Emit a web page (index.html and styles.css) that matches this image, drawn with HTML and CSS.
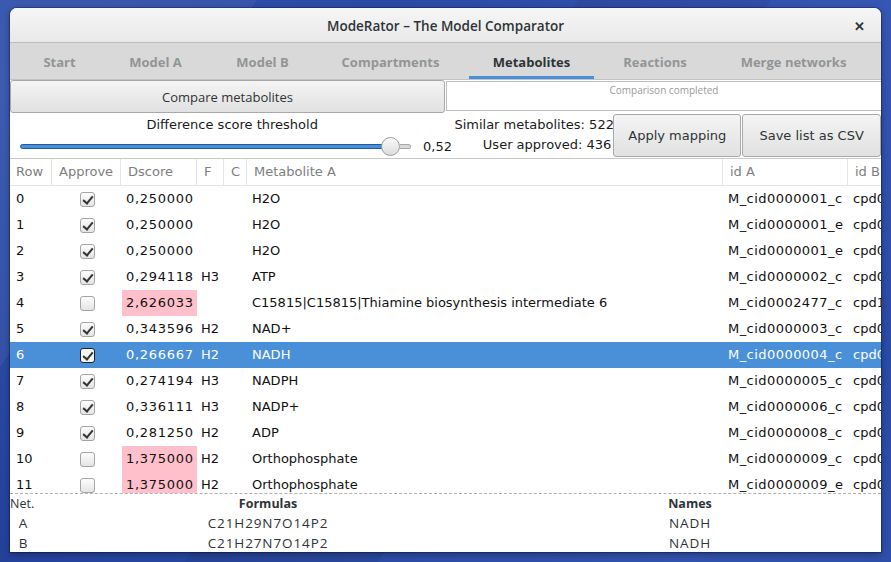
FILE: index.html
```html
<!DOCTYPE html>
<html>
<head>
<meta charset="utf-8">
<title>ModeRator</title>
<link rel="stylesheet" href="styles.css">
</head>
<body>
<div class="window">
  <div class="titlebar">
    <span class="title">ModeRator – The Model Comparator</span>
    <span class="close">✕</span>
  </div>
  <div class="tabs">
    <div class="tab w85">Start</div>
    <div class="tab w107">Model A</div>
    <div class="tab w107">Model B</div>
    <div class="tab w149">Compartments</div>
    <div class="tab w133 active">Metabolites</div>
    <div class="tab w114">Reactions</div>
    <div class="tab w163">Merge networks</div>
  </div>
  <div class="toprow">
    <button class="btn compare">Compare metabolites</button>
    <div class="progress"><span>Comparison completed</span></div>
  </div>
  <div class="controls">
    <div class="threshold">
      <div class="thlabel">Difference score threshold</div>
      <div class="sliderrow">
        <div class="slider"><span class="fill"></span><span class="knob"></span><span class="rest"></span></div>
        <span class="val">0,52</span>
      </div>
    </div>
    <div class="stats">
      <div>Similar metabolites: 522</div>
      <div>User approved: 436</div>
    </div>
    <button class="btn action apply">Apply mapping</button>
    <button class="btn action save">Save list as CSV</button>
  </div>
  <div class="table">
    <div class="thead">
      <div class="th">Row</div>
      <div class="th">Approve</div>
      <div class="th">Dscore</div>
      <div class="th">F</div>
      <div class="th">C</div>
      <div class="th">Metabolite A</div>
      <div class="th">id A</div>
      <div class="th last">id B</div>
    </div>
    <div class="tbody">
      <div class="tr"><div class="td">0</div><div class="td chk"><span class="cb on"></span></div><div class="td num">0,250000</div><div class="td"></div><div class="td"></div><div class="td">H2O</div><div class="td id">M_cid0000001_c</div><div class="td">cpd0</div></div>
      <div class="tr"><div class="td">1</div><div class="td chk"><span class="cb on"></span></div><div class="td num">0,250000</div><div class="td"></div><div class="td"></div><div class="td">H2O</div><div class="td id">M_cid0000001_e</div><div class="td">cpd0</div></div>
      <div class="tr"><div class="td">2</div><div class="td chk"><span class="cb on"></span></div><div class="td num">0,250000</div><div class="td"></div><div class="td"></div><div class="td">H2O</div><div class="td id">M_cid0000001_e</div><div class="td">cpd0</div></div>
      <div class="tr"><div class="td">3</div><div class="td chk"><span class="cb on"></span></div><div class="td num">0,294118</div><div class="td f">H3</div><div class="td"></div><div class="td">ATP</div><div class="td id">M_cid0000002_c</div><div class="td">cpd0</div></div>
      <div class="tr"><div class="td">4</div><div class="td chk"><span class="cb"></span></div><div class="td num pink">2,626033</div><div class="td"></div><div class="td"></div><div class="td">C15815|C15815|Thiamine biosynthesis intermediate 6</div><div class="td id">M_cid0002477_c</div><div class="td">cpd1</div></div>
      <div class="tr"><div class="td">5</div><div class="td chk"><span class="cb on"></span></div><div class="td num">0,343596</div><div class="td f">H2</div><div class="td"></div><div class="td">NAD+</div><div class="td id">M_cid0000003_c</div><div class="td">cpd0</div></div>
      <div class="tr sel"><div class="td">6</div><div class="td chk"><span class="cb on"></span></div><div class="td num">0,266667</div><div class="td f">H2</div><div class="td"></div><div class="td">NADH</div><div class="td id">M_cid0000004_c</div><div class="td">cpd0</div></div>
      <div class="tr"><div class="td">7</div><div class="td chk"><span class="cb on"></span></div><div class="td num">0,274194</div><div class="td f">H3</div><div class="td"></div><div class="td">NADPH</div><div class="td id">M_cid0000005_c</div><div class="td">cpd0</div></div>
      <div class="tr"><div class="td">8</div><div class="td chk"><span class="cb on"></span></div><div class="td num">0,336111</div><div class="td f">H3</div><div class="td"></div><div class="td">NADP+</div><div class="td id">M_cid0000006_c</div><div class="td">cpd0</div></div>
      <div class="tr"><div class="td">9</div><div class="td chk"><span class="cb on"></span></div><div class="td num">0,281250</div><div class="td f">H2</div><div class="td"></div><div class="td">ADP</div><div class="td id">M_cid0000008_c</div><div class="td">cpd0</div></div>
      <div class="tr"><div class="td">10</div><div class="td chk"><span class="cb"></span></div><div class="td num pink">1,375000</div><div class="td f">H2</div><div class="td"></div><div class="td">Orthophosphate</div><div class="td id">M_cid0000009_c</div><div class="td">cpd0</div></div>
      <div class="tr"><div class="td">11</div><div class="td chk"><span class="cb"></span></div><div class="td num pink">1,375000</div><div class="td f">H2</div><div class="td"></div><div class="td">Orthophosphate</div><div class="td id">M_cid0000009_e</div><div class="td">cpd0</div></div>
    </div>
  </div>
  <div class="details">
    <div class="dh left">Net.</div><div class="dh">Formulas</div><div class="dh">Names</div>
    <div class="dd">A</div><div class="dd">C21H29N7O14P2</div><div class="dd">NADH</div>
    <div class="dd">B</div><div class="dd">C21H27N7O14P2</div><div class="dd">NADH</div>
  </div>
</div>
</body>
</html>
```
FILE: styles.css
```css
* { box-sizing: border-box; }
html, body { margin: 0; padding: 0; }
body {
  width: 891px;
  height: 562px;
  overflow: hidden;
  background:
    linear-gradient(125deg, rgba(255,255,255,0.05) 0 20%, transparent 20% 45%, rgba(0,0,0,0.06) 45% 60%, transparent 60%),
    linear-gradient(35deg, #24419a 0%, #3152ad 40%, #2a4aa4 70%, #3656b4 100%);
  font-family: "DejaVu Sans", sans-serif;
  padding: 8px 10px 0 10px;
}
.window {
  width: 871px;
  height: 544px;
  background: #fff;
  border-radius: 7px 7px 0 0;
  overflow: hidden;
  display: flex;
  flex-direction: column;
  box-shadow: 0 0 0 1px rgba(0,0,0,0.25), 0 2px 6px rgba(0,0,0,0.35);
}
.titlebar {
  height: 35px;
  flex: none;
  display: flex;
  align-items: center;
  justify-content: center;
  position: relative;
  background: linear-gradient(#f6f6f6, #e9e9e9);
  border-bottom: 1px solid #bcbcbc;
  font-family: "Open Sans", sans-serif;
  font-weight: 600;
  font-size: 13.5px;
  color: #2e3436;
}
.title { padding-top: 1px; }
.close {
  position: absolute;
  right: 16px;
  top: 9px;
  font-size: 13px;
  font-weight: 700;
  color: #2e3436;
}
.tabs {
  height: 37px;
  flex: none;
  display: flex;
  padding-left: 7px;
  background: #d9d9d9;
  border-bottom: 1px solid #c2c2c2;
  font-family: "Open Sans", sans-serif;
  font-weight: 700;
  font-size: 13px;
  color: #929595;
}
.tab {
  display: flex;
  align-items: center;
  justify-content: center;
  padding-top: 2px;
  position: relative;
}
.tab.active { color: #2e3436; }
.tab.active::after {
  content: "";
  position: absolute;
  left: 4px; right: 4px; bottom: 0;
  height: 3px;
  background: #4a90d9;
}
.w85 { width: 85px; } .w107 { width: 107px; } .w149 { width: 149px; }
.w133 { width: 133px; } .w114 { width: 114px; } .w163 { width: 163px; }

.toprow {
  height: 33px;
  flex: none;
  display: flex;
  background: #fff;
}
.btn {
  font-family: "Open Sans", sans-serif;
  font-size: 13px;
  color: #2e3436;
  background: linear-gradient(#f4f4f4, #e1e1e1);
  border: 1px solid #a8a8a8;
  border-radius: 3px;
  margin: 0;
  padding: 0;
}
.compare {
  width: 435px;
  height: 33px;
  border-radius: 3px;
}
.progress {
  margin-left: 1px;
  flex: 1;
  height: 30px;
  margin-top: 1px;
  border: 1px solid #bdbdbd;
  border-right: none;
  background: #fff;
  display: flex;
  justify-content: center;
  font-family: "Open Sans", sans-serif;
  font-size: 10px;
  color: #9a9a9a;
  padding-top: 1px;
}
.controls {
  height: 45px;
  flex: none;
  display: flex;
  font-size: 13px;
  color: #1a1a1a;
}
.threshold { width: 445px; padding-top: 2px; }
.thlabel { height: 20px; line-height: 20px; text-align: center; }
.sliderrow { height: 22px; display: flex; align-items: center; padding-left: 10px; }
.slider { width: 391px; height: 22px; display: flex; align-items: center; }
.fill {
  flex: 1;
  height: 5px;
  background: #4a90d9;
  border: 1px solid #1f5b9c;
  border-radius: 3px 0 0 3px;
}
.knob {
  width: 19px;
  height: 19px;
  border-radius: 50%;
  border: 1px solid #9a9a9a;
  background: linear-gradient(#fbfbfb, #dcdcdc);
  margin-left: -2px;
  flex: none;
}
.rest {
  width: 11px;
  height: 5px;
  background: #d8d8d8;
  border: 1px solid #a8a8a8;
  border-left: none;
  border-radius: 0 3px 3px 0;
}
.val { margin-left: 12px; }
.stats {
  width: 158px;
  padding-top: 2px;
  padding-right: 1px;
  text-align: right;
  line-height: 20px;
  white-space: nowrap;
}
.action {
  font-family: "DejaVu Sans", sans-serif;
  height: 43px;
  margin-top: 1px;
  font-size: 13px;
  border-radius: 3px;
}
.apply { width: 128px; margin-left: 1px; }
.save { width: 139px; margin-left: 1px; }

.table {
  height: 335px;
  flex: none;
  border-top: 1px solid #c8c8c8;
  overflow: hidden;
  font-size: 13px;
}
.thead, .tr {
  display: grid;
  grid-template-columns: 42px 69px 76px 27px 23px 476px 125px 33px;
  width: 871px;
}
.thead { height: 27px; border-bottom: 1px solid #e4e4e4; }
.th {
  color: #7e7e7e;
  line-height: 26px;
  padding-left: 7px;
  border-right: 1px solid #e4e4e4;
  white-space: nowrap;
  overflow: hidden;
}
.th:first-child { padding-left: 6px; }
.th.last { border-right: none; }
.tbody { height: 307px; overflow: hidden; }
.tr { height: 26px; color: #111; }
.td {
  line-height: 26px;
  padding-left: 5px;
  white-space: nowrap;
  overflow: hidden;
}
.td:first-child { padding-left: 6px; }
.td.f { padding-left: 4px; }
.num { letter-spacing: 0.7px; padding-left: 4px; margin-left: 1px; }
.id { letter-spacing: 0.45px; }
.pink { background: #ffc0cb; }
.chk { display: flex; align-items: center; justify-content: center; padding: 0 0 0 1px; }
.cb {
  width: 15px;
  height: 15px;
  border: 1px solid #a4a4a4;
  border-radius: 3px;
  background: linear-gradient(#fdfdfd, #e4e4e4);
  position: relative;
}
.cb.on::after {
  content: "";
  position: absolute;
  left: 4px;
  top: 1px;
  width: 4px;
  height: 8px;
  border-right: 2px solid #333;
  border-bottom: 2px solid #333;
  transform: rotate(40deg);
}
.tr.sel { background: #4a90d9; color: #fff; }
.tr.sel .cb { border-color: #222; background: #f4f4f4; }

.details {
  flex: 1;
  border-top: 1px dashed #b0b0b0;
  display: grid;
  grid-template-columns: 27px 462px 1fr;
  grid-template-rows: 18px 20px 20px;
  font-family: "Open Sans", sans-serif;
  font-size: 12.5px;
  color: #2e3436;
  padding-top: 1px;
}
.dh { text-align: center; font-weight: 700; line-height: 17px; }
.dh.left { text-align: left; font-weight: 400; white-space: nowrap; }
.dd { text-align: center; line-height: 20px; font-size: 13.5px; letter-spacing: 0.9px; }
```
